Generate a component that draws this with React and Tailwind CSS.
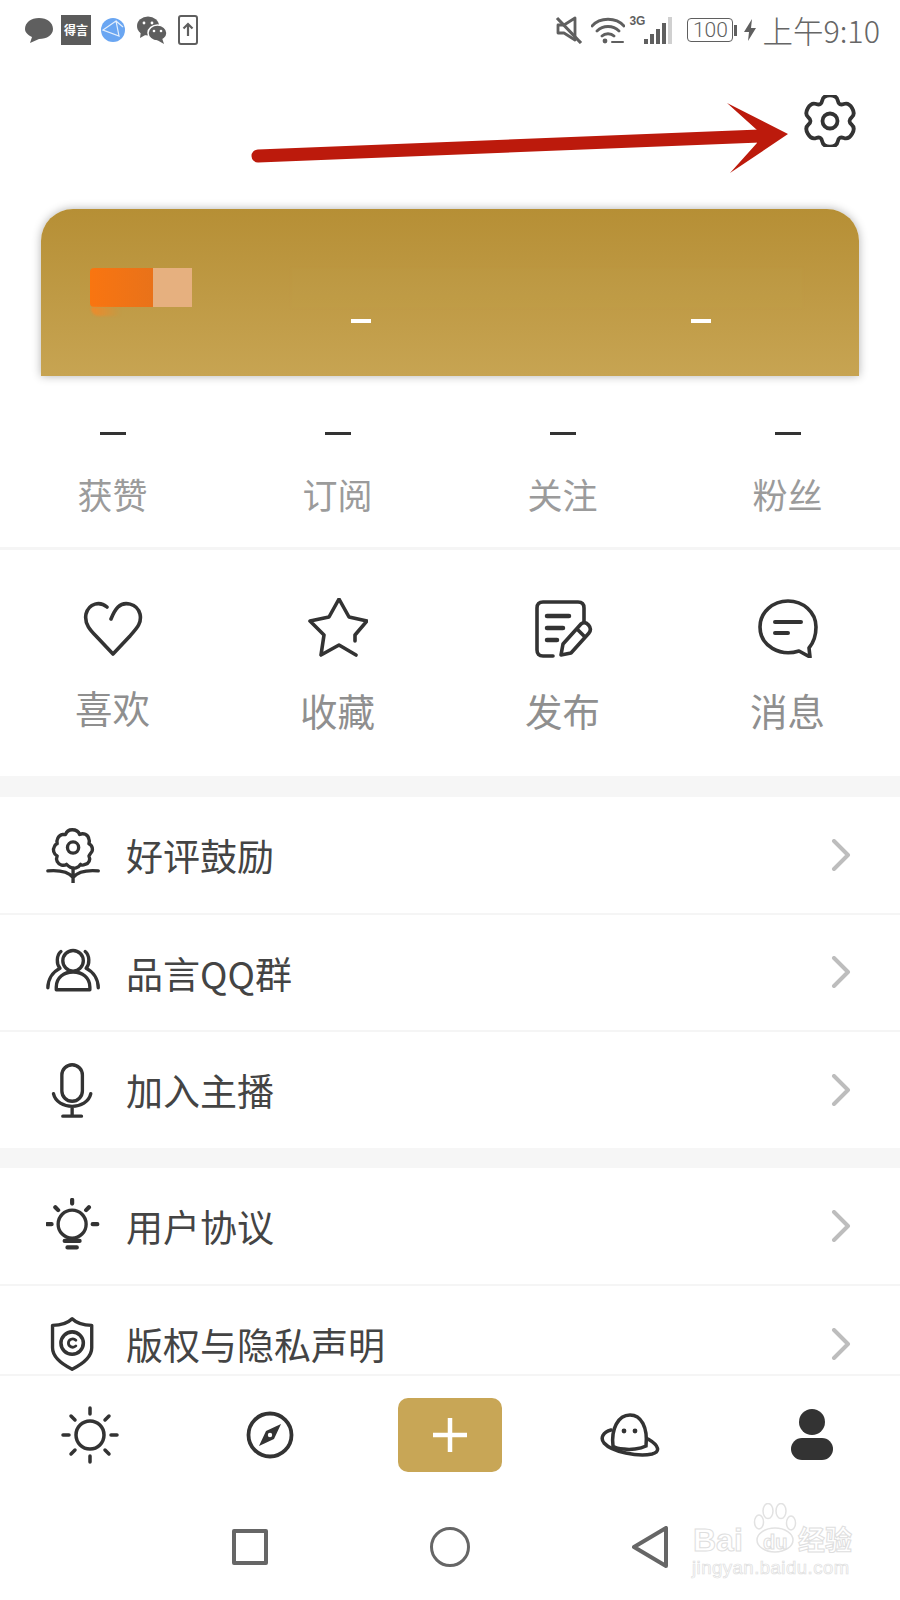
import { Fragment } from 'react';

const CJK = 'font-["Noto_Sans_CJK_SC","Noto_Sans",sans-serif]';

const stats = ['获赞', '订阅', '关注', '粉丝'];

function Icon({ size = 60, box = 60, sw = 3.6, color = '#333', fill = 'none', children }) {
  return (
    <svg width={size} height={size} viewBox={`0 0 ${box} ${box}`} fill={fill} stroke={color} strokeWidth={sw} strokeLinecap="round" strokeLinejoin="round">
      {children}
    </svg>
  );
}

// six lobes: two outer points and one inner point per lobe, rounded with quadratics through the midpoints
function gearPath() {
  const c = 26;
  const pts = [];
  for (let i = 0; i < 6; i++) {
    const t = -90 + i * 60;
    [[t - 15, 26.5], [t + 15, 26.5], [t + 30, 17.5]].forEach(([deg, r]) => {
      const a = (deg * Math.PI) / 180;
      pts.push([c + r * Math.cos(a), c + r * Math.sin(a)]);
    });
  }
  const mid = (p, q) => [(p[0] + q[0]) / 2, (p[1] + q[1]) / 2];
  const start = mid(pts[pts.length - 1], pts[0]);
  let d = `M${start[0]} ${start[1]} `;
  pts.forEach((p, i) => {
    const m = mid(p, pts[(i + 1) % pts.length]);
    d += `Q${p[0]} ${p[1]} ${m[0]} ${m[1]} `;
  });
  return d + 'Z';
}

const HeartIcon = () => (
  <Icon>
    <path d="M24 9 C17 3 6 5 3 16 C1 26 8 33 13 38 L30 56 L47 38 C54 30 59 25 57 16 C54 5 41 3 35 9 C32 12 30 16 28 21" />
  </Icon>
);

const StarIcon = () => (
  <Icon>
    <path d="M48 57 L31 47 L13 57 L16 37 L2 23 L21 19 L31 1 L41 19 L59 23 L47 37 L47 43" />
  </Icon>
);

const DocIcon = () => (
  <Icon>
    <path d="M20 58 H10 Q4 58 4 52 V10 Q4 4 10 4 H45 Q51 4 51 10 V24" />
    <path d="M14 18 H36 M14 30 H30 M14 42 H24" strokeWidth="4.500" />
    <path d="M28 57 L30 46 L48 26 Q52 23 55.500 27 Q59 31 56 35 L38 55 Z M44 31 L52 39" />
  </Icon>
);

const ChatIcon = () => (
  <Icon>
    <path d="M51 50 L52 59 L41 53 C22 59 2 48 2 29 C2 14 15 3 30 3 C45 3 58 14 58 29 C58 37 56 44 51 50 Z" />
    <path d="M17 24 H43 M17 35 H30" strokeWidth="4" />
  </Icon>
);

const FlowerIcon = () => (
  <Icon size={56}>
    <path d="M28 3 C32 3 35 5 36 8 C40 6 45 8 46 13 C47 15 46 17 46 18 C50 20 51 25 48 28 C47 29 47 30 46 31 C48 35 46 39 42 40 C40 41 38 41 37 40 C35 44 30 45 26 43 C24 42 23 41 22 40 C19 42 14 41 12 37 C11 35 11 33 12 31 C8 29 7 24 9 21 C10 19 11 18 12 18 C11 14 13 9 18 8 C19 8 20 8 21 8 C22 5 25 3 28 3 Z" />
    <circle cx="29" cy="22" r="6" />
    <path d="M2 47 C14 46 24 48 29 54 C34 48 44 46 56 47 M29 44 V60" />
  </Icon>
);

const PeopleIcon = () => (
  <Icon size={56}>
    <circle cx="29" cy="18" r="11" />
    <path d="M11 49 V46 C11 36 19 30 29 30 C39 30 47 36 47 46 V49 Z" />
    <path d="M16 8 C11 12 11 22 15 26 C7 30 2 38 2 47 M42 8 C47 12 47 22 43 26 C51 30 56 38 56 47" />
  </Icon>
);

const MicIcon = () => (
  <Icon size={56}>
    <rect x="17" y="3" width="22" height="39" rx="11" />
    <path d="M8 34 C12 52 44 52 48 34 M28 48 V58 M18 58 H38" />
  </Icon>
);

const BulbIcon = () => (
  <Icon size={56}>
    <circle cx="28" cy="28" r="15" />
    <path d="M28 2 V6 M10 10 L13 13 M46 10 L43 13 M1 28 H6 M50 28 H55 M20 46 H36 M23 53 H33" strokeWidth="4.500" />
  </Icon>
);

const ShieldIcon = () => (
  <Icon size={56}>
    <path d="M28 3 C33 8 41 10 49 10 V34 C49 45 38 52 28 57 C18 52 7 45 7 34 V10 C15 10 23 8 28 3 Z" />
    <circle cx="28" cy="29" r="12" strokeWidth="3.800" />
    <path d="M32 26 C29 23 24 25 24 29 C24 33 29 35 32 32" strokeWidth="3" />
  </Icon>
);

const Chevron = () => (
  <svg width="22" height="32" viewBox="0 0 22 32" fill="none" stroke="#bdbdbd" strokeWidth="4" strokeLinecap="round" strokeLinejoin="round">
    <path d="M4 2 L18 16 L4 30" />
  </svg>
);

function MenuRow({ icon, label, last }) {
  return (
    <div className={`flex items-center pl-[46px] pr-[48px] ${last ? 'h-[116px]' : 'h-[117.5px] border-b-2 border-[#f5f5f5]'}`}>
      <div className="flex w-[56px] justify-center">{icon}</div>
      <span className="ml-[24px] flex-1 pt-[2px] text-[37px] text-[#444]">{label}</span>
      <Chevron />
    </div>
  );
}

function StatusBar() {
  return (
    <div className="flex h-[60px] shrink-0 items-center pl-[25px] pr-[20px]">
      <svg width="28" height="28" viewBox="0 0 28 28" fill="#5f5f5f"><path d="M14 2 C22 2 28 6.500 28 13 C28 19 22 23 14 23 L5 27 L7 21 C3 19 0 16.500 0 13 C0 6.500 6 2 14 2 Z" /></svg>
      <div className={`ml-[8px] flex h-[30px] w-[30px] items-center justify-center bg-[#5b5b5b] text-[12px] font-bold leading-none text-white ${CJK}`}>得言</div>
      <svg className="ml-[10px]" width="24" height="24" viewBox="0 0 24 24">
        <circle cx="12" cy="12" r="12" fill="#6aa6f2" />
        <path d="M2 12 L15 3 L18 18 Z M2 12 L18 18 M15 3 L22 9" stroke="#e4effc" strokeWidth="1.200" fill="none" />
      </svg>
      <svg className="ml-[12px]" width="30" height="28" viewBox="0 0 30 28" fill="#5f5f5f">
        <ellipse cx="11" cy="10" rx="11" ry="9.500" />
        <path d="M4 15 L3 22 L10 18 Z" />
        <ellipse cx="20.500" cy="17" rx="9.500" ry="8" stroke="#fff" strokeWidth="1.500" />
        <path d="M25 22 L27 28 L20 24 Z" />
        <circle cx="7" cy="7" r="1.400" fill="#fff" />
        <circle cx="15" cy="7" r="1.400" fill="#fff" />
        <circle cx="17" cy="15" r="1.300" fill="#fff" />
        <circle cx="24" cy="15" r="1.300" fill="#fff" />
      </svg>
      <svg className="ml-[11px]" width="20" height="30" viewBox="0 0 20 30" fill="none" stroke="#5f5f5f">
        <rect x="1" y="1" width="18" height="28" rx="2" strokeWidth="2" />
        <path d="M10 21 V9 M5.500 13.500 L10 9 L14.500 13.500" strokeWidth="2.200" />
      </svg>

      <div className="flex-1" />

      <svg width="28" height="28" viewBox="0 0 28 28" fill="none" stroke="#5f5f5f" strokeWidth="2.800" strokeLinejoin="round">
        <path d="M3 9 H9 L20 2 V24 L9 17 H3 Z" />
        <path d="M2 2 L26 27" strokeWidth="3.200" />
      </svg>
      <svg className="ml-[8px]" width="34" height="28" viewBox="0 0 34 28" fill="none" stroke="#5f5f5f" strokeWidth="2.800" strokeLinecap="round">
        <path d="M1 10 C9 1 25 1 33 10 M6 15 C12 9 22 9 28 15 M11 20 C14 17 20 17 23 20" />
        <circle cx="14" cy="25" r="2.400" fill="#5f5f5f" stroke="none" />
        <path d="M21 26 H32" strokeWidth="2" />
      </svg>
      <div className="relative ml-[4px] h-[30px] w-[46px]">
        <span className="absolute left-0 top-[0px] font-['Liberation_Sans',sans-serif] text-[12px] font-bold leading-none text-[#5f5f5f]">3G</span>
        <div className="absolute bottom-[1px] left-[15px] flex items-end gap-[2px]">
          <div className="h-[5px] w-[4px] bg-[#5f5f5f]" />
          <div className="h-[10px] w-[4px] bg-[#5f5f5f]" />
          <div className="h-[15px] w-[4px] bg-[#5f5f5f]" />
          <div className="h-[21px] w-[4px] bg-[#5f5f5f]" />
          <div className="h-[27px] w-[4px] bg-[#d0d0d0]" />
        </div>
      </div>
      <div className="ml-[12px] flex h-[24px] w-[46px] items-center justify-center rounded-[4px] border border-[#5f5f5f] font-['Roboto',sans-serif] text-[21px] font-light leading-none text-[#5f5f5f]">100</div>
      <div className="ml-[1px] h-[11px] w-[3px] bg-[#5f5f5f]" />
      <svg className="ml-[7px]" width="12" height="22" viewBox="0 0 12 22" fill="#5f5f5f"><path d="M8 0 L0 13 H5 L4 22 L12 9 H7 Z" /></svg>
      <span className={`ml-[6px] text-[30.5px] leading-none text-[#666] ${CJK} font-light`}>上午9:10</span>
    </div>
  );
}

function NavBar() {
  return (
    <div className="grid h-[116px] shrink-0 grid-cols-5 items-center border-t-2 border-[#f5f5f5] bg-white pt-[3px]">
      <div className="flex justify-center">
        <svg width="58" height="58" viewBox="0 0 58 58" fill="none" stroke="#333" strokeWidth="3.500" strokeLinecap="round">
          <circle cx="29" cy="29" r="14" />
          <path d="M29 2 V8 M29 50 V56 M2 29 H8 M50 29 H56 M10 10 L14 14 M44 44 L48 48 M48 10 L44 14 M14 44 L10 48" />
        </svg>
      </div>
      <div className="flex justify-center">
        <svg width="48" height="48" viewBox="0 0 48 48" fill="none" stroke="#333" strokeWidth="3.800">
          <circle cx="24" cy="24" r="21.500" />
          <path d="M35 13 L28 28 L13 35 L20 20 Z" fill="#333" stroke="none" />
          <circle cx="24" cy="24" r="2.200" fill="#fff" stroke="none" />
        </svg>
      </div>
      <div className="flex justify-center">
        <div className="flex h-[74px] w-[104px] items-center justify-center rounded-[10px] bg-[#c8a656]">
          <svg width="34" height="34" viewBox="0 0 34 34" fill="none" stroke="#fff" strokeWidth="4.500"><path d="M17 0 V34 M0 17 H34" /></svg>
        </div>
      </div>
      <div className="flex justify-center">
        <svg width="60" height="44" viewBox="0 0 60 44" fill="none" stroke="#333" strokeWidth="3.500" strokeLinecap="round">
          <path d="M13 33 C11 16 18 2 30 2 C41 2 48 14 46 33 C40 36 30 37 24 36 C19 36 15 35 13 33 Z" />
          <path d="M11 17 C3 19 0 25 4 30 C12 39 38 44 52 41 C60 39 60 33 48 26" />
          <circle cx="24" cy="18" r="2.400" fill="#333" stroke="none" />
          <circle cx="35" cy="18" r="2.400" fill="#333" stroke="none" />
        </svg>
      </div>
      <div className="flex flex-col items-center pl-[4px]">
        <div className="h-[26px] w-[26px] rounded-full bg-[#333]" />
        <div className="mt-[3px] h-[22px] w-[42px] rounded-[11px] bg-[#333]" />
      </div>
    </div>
  );
}

function SystemBar() {
  return (
    <div className="relative flex flex-1 items-center justify-center gap-[162px] bg-white pt-[4px]">
      <div className="h-[36px] w-[36px] rounded-[2px] border-[4px] border-[#666]" />
      <div className="h-[40px] w-[40px] rounded-full border-[3.500px] border-[#666]" />
      <svg width="36" height="42" viewBox="0 0 36 42" fill="none" stroke="#666" strokeWidth="4" strokeLinejoin="round"><path d="M34 2 V40 L2 21 Z" /></svg>

      {/* watermark */}
      <div className="absolute left-[690px] top-[13px] h-[80px] w-[170px] select-none">
        <svg className="absolute left-[62px] top-0" width="46" height="50" viewBox="0 0 46 50" fill="#fff" stroke="#e2e2e2" strokeWidth="1.500">
          <ellipse cx="7" cy="19" rx="4.500" ry="7" />
          <ellipse cx="16" cy="8" rx="5" ry="7.500" />
          <ellipse cx="29" cy="8" rx="5" ry="7.500" />
          <ellipse cx="39" cy="20" rx="4.500" ry="7" />
          <ellipse cx="23" cy="37" rx="18" ry="12" />
        </svg>
        <span className="absolute left-[3px] top-[21px] font-['Liberation_Sans',sans-serif] text-[32px] font-bold leading-none text-white [-webkit-text-stroke:1px_#dedede]">Bai</span>
        <span className="absolute left-[73px] top-[29px] font-['Liberation_Sans',sans-serif] text-[20px] font-bold leading-none text-white [-webkit-text-stroke:1px_#dedede]">du</span>
        <span className={`absolute left-[108px] top-[22px] text-[27px] font-bold leading-none text-white [-webkit-text-stroke:1px_#dedede] ${CJK}`}>经验</span>
        <span className="absolute left-[2px] top-[56px] font-['Liberation_Sans',sans-serif] text-[18.5px] leading-none tracking-[0.5px] text-white [-webkit-text-stroke:0.7px_#dedede]">jingyan.baidu.com</span>
      </div>
    </div>
  );
}

export default function App() {
  return (
    <div className={`relative flex h-[1600px] w-[900px] flex-col overflow-hidden bg-white ${CJK}`}>
      <StatusBar />

      <div className="flex h-[149px] shrink-0 items-start justify-end pr-[44px] pt-[35px]">
        <svg width="52" height="52" viewBox="0 0 52 52" fill="none" stroke="#333" strokeWidth="3.800" strokeLinejoin="round">
          <path d={gearPath()} />
          <circle cx="26" cy="26" r="7.500" />
        </svg>
      </div>

      {/* blurred profile card */}
      <div className="relative mx-[41px] h-[167px] shrink-0 rounded-t-[32px] bg-gradient-to-b from-[#b68f35] to-[#c7a452] shadow-[0_0_10px_rgba(0,0,0,0.3)]">
        <div className="absolute left-[250px] right-[56px] top-[59px] h-[40px] bg-[#c7a452]/10 blur-[1px]" />
        <div className="absolute left-[49px] top-[59px] flex h-[39px] blur-[0.6px]">
          <div className="w-[63px] rounded-l-[4px] bg-gradient-to-r from-[#f97510] to-[#e97219]" />
          <div className="w-[39px] bg-[#e6b07f]" />
        </div>
        <div className="absolute left-[50px] top-[98px] h-[9px] w-[30px] rounded-bl-[8px] bg-gradient-to-r from-[#ee8a2a] to-transparent blur-[1px]" />
        <div className="absolute left-[310px] top-[110px] h-[4px] w-[20px] bg-white" />
        <div className="absolute left-[650px] top-[110px] h-[4px] w-[20px] bg-white" />
      </div>

      <div className="grid h-[174px] shrink-0 grid-cols-4 border-b-[3px] border-[#f5f5f5]">
        {stats.map((s) => (
          <div key={s} className="flex flex-col items-center pt-[56px]">
            <div className="h-[3px] w-[26px] bg-[#333]" />
            <span className="mt-[34px] text-[35px] leading-[50px] text-[#9b9b9b]">{s}</span>
          </div>
        ))}
      </div>

      <div className="grid h-[226px] shrink-0 grid-cols-4">
        {[
          ['喜欢', <HeartIcon key="h" />],
          ['收藏', <StarIcon key="s" />],
          ['发布', <DocIcon key="d" />],
          ['消息', <ChatIcon key="c" />],
        ].map(([label, icon]) => (
          <Fragment key={label}>
            <div className="flex flex-col items-center pt-[48px]">
              {icon}
              <span className={`text-[37.5px] leading-[50px] text-[#8f8f8f] ${label === '喜欢' ? 'mt-[24px]' : 'mt-[27px]'}`}>{label}</span>
            </div>
          </Fragment>
        ))}
      </div>

      <div className="h-[21px] shrink-0 bg-[#f6f6f6]" />

      <div className="min-h-0 flex-1 overflow-hidden">
        <MenuRow icon={<FlowerIcon />} label="好评鼓励" />
        <MenuRow icon={<PeopleIcon />} label="品言QQ群" />
        <MenuRow icon={<MicIcon />} label="加入主播" last />
        <div className="h-[20px] bg-[#f6f6f6]" />
        <MenuRow icon={<BulbIcon />} label="用户协议" />
        <MenuRow icon={<ShieldIcon />} label="版权与隐私声明" last />
      </div>

      <NavBar />
      <div className="flex h-[110px] shrink-0 flex-col"><SystemBar /></div>

      {/* red annotation arrow */}
      <svg className="absolute left-[245px] top-[95px]" width="550" height="85" viewBox="0 0 550 85">
        <path d="M13 61 L515 41" stroke="#bc1a0c" strokeWidth="13" strokeLinecap="round" />
        <path d="M482 8 L543 39 L485 78 L512 48 L512 35 Z" fill="#bc1a0c" />
      </svg>
    </div>
  );
}
